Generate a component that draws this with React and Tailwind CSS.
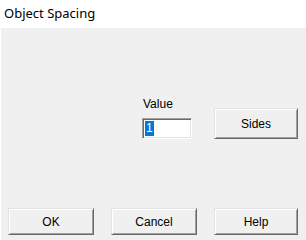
import React from "react";

const btn =
  "flex items-center justify-center bg-[#f0f0f0] text-black text-[12px] border border-t-[#e3e3e3] border-l-[#e3e3e3] border-r-[#696969] border-b-[#696969] shadow-[inset_1px_1px_0_#ffffff,inset_-1px_-1px_0_#a0a0a0]";

export default function App() {
  return (
    <div className="w-[306px] h-[240px] flex flex-col bg-white overflow-hidden font-['Liberation_Sans',Arial,sans-serif]">
      <div className="h-[28px] shrink-0 flex items-center pl-[4px] pb-[1px] bg-white text-[13px] text-black font-['Noto_Sans','Open_Sans',sans-serif]">
        Object Spacing
      </div>
      <div className="flex-1 flex flex-col bg-[#f0f0f0] border-l border-white pl-[7px] pr-[8px]">
        <div className="flex mt-[70px] ml-[134px] items-end">
          <div className="flex flex-col">
            <span className="text-[12px] text-black leading-none mb-[8px] ml-[1px]">Value</span>
            <div className="w-[50px] h-[21px] bg-white border border-t-[#a0a0a0] border-l-[#a0a0a0] border-r-white border-b-white shadow-[inset_1px_1px_0_#696969,inset_-1px_-1px_0_#e3e3e3] flex items-center pl-[2px]">
              <span className="bg-[#0078d7] text-white text-[12px] leading-[15px] px-[1px]">1</span>
            </div>
          </div>
          <button className={`${btn} w-[84px] h-[31px] ml-[22px]`}>Sides</button>
        </div>
        <div className="flex gap-[17px] mt-[69px]">
          <button className={`${btn} w-[86px] h-[27px]`}>OK</button>
          <button className={`${btn} w-[86px] h-[27px]`}>Cancel</button>
          <button className={`${btn} w-[84px] h-[27px]`}>Help</button>
        </div>
      </div>
    </div>
  );
}
